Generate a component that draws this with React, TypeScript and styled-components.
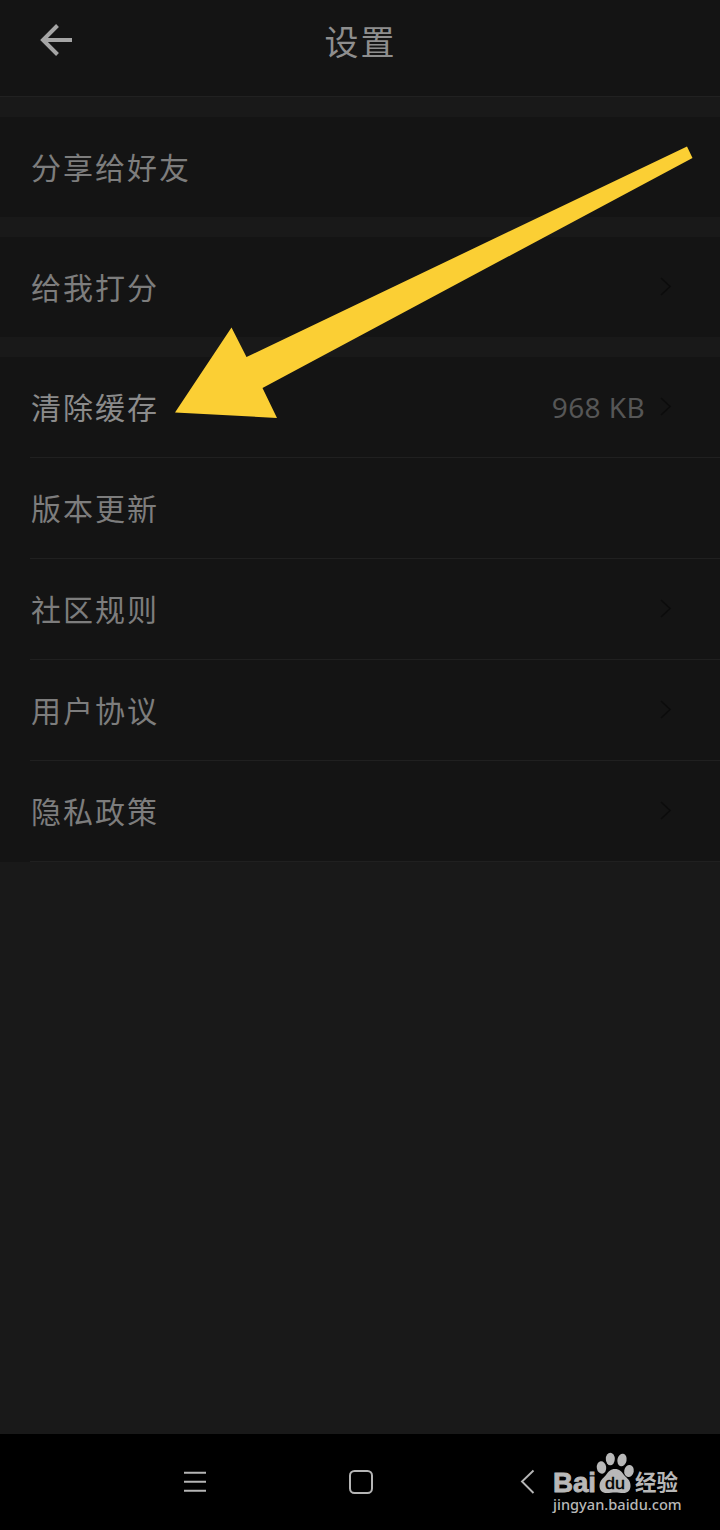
import React from 'react';
import styled, { createGlobalStyle } from 'styled-components';

const GlobalStyle = createGlobalStyle`
  * { box-sizing: border-box; }
  body { margin: 0; background: #191919; }
`;

const Screen = styled.div`
  position: relative;
  display: flex;
  flex-direction: column;
  width: 720px;
  height: 1530px;
  overflow: hidden;
  background: #191919;
  font-family: 'Noto Sans', 'Noto Sans CJK SC', sans-serif;
`;

const Header = styled.header`
  display: grid;
  grid-template-columns: 80px 1fr 80px;
  align-items: center;
  height: 97px;
  padding-bottom: 14px;
  background: #141414;
  border-bottom: 1px solid #212121;
`;

const BackButton = styled.button`
  display: flex;
  margin: 0 0 2px 39px;
  padding: 0;
  border: 0;
  background: none;
`;

const Title = styled.h1`
  margin: 0;
  padding: 0 0 1px 1px;
  text-align: center;
  font: 400 34px/50px 'Noto Sans CJK SC', sans-serif;
  letter-spacing: 2px;
  color: #8e8e8e;
`;

const Main = styled.main`
  display: flex;
  flex-direction: column;
  gap: 20px;
  flex: 1;
  padding-top: 20px;
`;

const Group = styled.section`
  background: #141414;
`;

const Row = styled.div<{ $divided?: boolean }>`
  display: flex;
  align-items: center;
  height: ${(p) => (p.$divided ? 101 : 100)}px;
  margin-left: ${(p) => (p.$divided ? 30 : 0)}px;
  padding: 0 48px 0 ${(p) => (p.$divided ? 1 : 31)}px;
  border-bottom: ${(p) => (p.$divided ? '1px solid #202020' : '0')};
`;

const Label = styled.span<{ $bright?: boolean }>`
  flex: 1;
  padding-bottom: 3px;
  font: 400 30px/44px 'Noto Sans CJK SC', sans-serif;
  letter-spacing: 2px;
  color: ${(p) => (p.$bright ? '#8b8b8b' : '#7d7d7d')};
`;

const Value = styled.span`
  margin-right: 15px;
  font-size: 28px;
  line-height: 40px;
  letter-spacing: 0.4px;
  color: #565656;
`;

const SystemBar = styled.nav`
  display: flex;
  align-items: flex-start;
  height: 96px;
  padding: 0 40px 0 183px;
  background: #000;
`;

const NavKey = styled.span<{ $gap: number }>`
  display: flex;
  margin: 35px ${(p) => p.$gap}px 0 0;
`;

const Brand = styled.div`
  display: flex;
  flex-direction: column;
  width: 130px;
  padding-top: 18px;
`;

const Site = styled.span`
  margin-top: -2px;
  font: 500 14.6px/20px 'Noto Sans', sans-serif;
  color: #b8b8b8;
  white-space: nowrap;
`;

const Pointer = styled.svg`
  position: absolute;
  top: 140px;
  left: 170px;
  pointer-events: none;
`;

const Chevron = () => (
  <svg width="12" height="20" viewBox="0 0 12 20" fill="none" stroke="#0c0c0c" strokeWidth="1.6">
    <path d="M1 1 L10 9.5 L1 18" />
  </svg>
);

const BrandLogo = () => (
  <svg width="130" height="44" viewBox="0 0 130 44" fill="#b8b8b8" overflow="visible">
    <text x="0" y="39.5" fontFamily="Liberation Sans" fontWeight="700" fontSize="27.500" textLength="43" lengthAdjust="spacingAndGlyphs" stroke="#b8b8b8" strokeWidth=".9">Bai</text>
    <ellipse cx="48.500" cy="15.500" rx="4.700" ry="6.300" transform="rotate(-8 48.500 15.500)" />
    <ellipse cx="57.300" cy="7" rx="4.500" ry="6.300" />
    <ellipse cx="69" cy="8" rx="4.600" ry="6.300" transform="rotate(12 69 8)" />
    <ellipse cx="76" cy="19" rx="4.800" ry="6.100" transform="rotate(10 76 19)" />
    <path d="M62 17 C66.500 17 68.500 19.500 71 23 C74 26.500 77.500 28 77.500 34 C77.500 38.500 74.500 41 70.500 41 C67 41 65 40.500 62 40.500 C59 40.500 57 41 53.500 41 C49.500 41 46.500 38.500 46.500 34 C46.500 28.500 50 26.500 53 23 C55.500 19.500 57.500 17 62 17Z" />
    <text x="52" y="36.500" fill="#000" fontFamily="Liberation Sans" fontWeight="400" fontSize="17" stroke="#000" strokeWidth=".4" textLength="20" lengthAdjust="spacingAndGlyphs">du</text>
    <text x="82" y="37.500" fontFamily="Noto Sans CJK SC" fontWeight="700" fontSize="22" textLength="43" lengthAdjust="spacingAndGlyphs">经验</text>
  </svg>
);

type Item = { label: string; value?: string; arrow?: boolean; bright?: boolean };

const groups: Item[][] = [
  [{ label: '分享给好友' }],
  [{ label: '给我打分', arrow: true }],
  [
    { label: '清除缓存', value: '968 KB', arrow: true, bright: true },
    { label: '版本更新' },
    { label: '社区规则', arrow: true },
    { label: '用户协议', arrow: true },
    { label: '隐私政策', arrow: true },
  ],
];

export default function App() {
  return (
    <Screen>
      <GlobalStyle />
      <Header>
        <BackButton aria-label="返回">
          <svg width="34" height="34" viewBox="0 0 34 34" fill="none" stroke="#a5a5a5" strokeWidth="4">
            <path d="M33 17 H5 M18.500 2.500 L4 17 L18.500 31.500" />
          </svg>
        </BackButton>
        <Title>设置</Title>
      </Header>
      <Main>
        {groups.map((items, i) => (
          <Group key={i}>
            {items.map((item) => (
              <Row key={item.label} $divided={items.length > 1}>
                <Label $bright={item.bright}>{item.label}</Label>
                {item.value && <Value>{item.value}</Value>}
                {item.arrow && <Chevron />}
              </Row>
            ))}
          </Group>
        ))}
      </Main>
      <SystemBar>
        <NavKey $gap={141}>
          <svg width="24" height="26" viewBox="0 0 24 26" stroke="#b5b5b5" strokeWidth="2">
            <path d="M1 3.800 H23 M1 12.800 H23 M1 21.800 H23" />
          </svg>
        </NavKey>
        <NavKey $gap={146}>
          <svg width="26" height="26" viewBox="0 0 26 26" fill="none" stroke="#b5b5b5" strokeWidth="2">
            <rect x="2" y="2" width="22" height="22" rx="4.500" />
          </svg>
        </NavKey>
        <NavKey $gap={17}>
          <svg width="16" height="26" viewBox="0 0 16 26" fill="none" stroke="#b5b5b5" strokeWidth="1.900">
            <path d="M13.500 1.500 L2 12.500 L13.500 24" />
          </svg>
        </NavKey>
        <Brand>
          <BrandLogo />
          <Site>jingyan.baidu.com</Site>
        </Brand>
      </SystemBar>
      <Pointer width="530" height="285" viewBox="170 140 530 285">
        <polygon points="175,412.500 231.500,327.500 246.500,357 687,146.500 692.500,158 262.500,388 277,418" fill="#fbcf34" />
      </Pointer>
    </Screen>
  );
}
